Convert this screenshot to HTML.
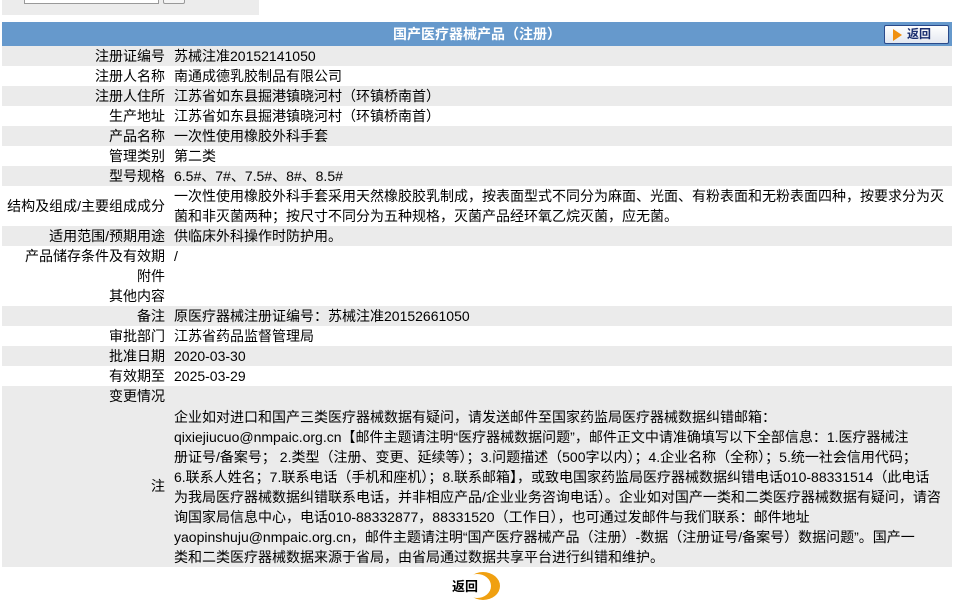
<!DOCTYPE html>
<html><head><meta charset="utf-8"><style>
body{margin:0;width:953px;height:601px;background:#fff;font-family:"Liberation Sans","Noto Sans CJK SC",sans-serif;font-size:14px;color:#000;position:relative;overflow:hidden}
.top{position:absolute;left:2px;top:0;width:257px;height:15px;background:#ececec}
.in{position:absolute;left:22px;top:-2px;width:133px;height:4px;border:1px solid #999;background:#fff}
.bt{position:absolute;left:161px;top:-2px;width:20px;height:4px;border:1px solid #999;border-radius:2px;background:#f4f4f4}
.hd{position:absolute;left:2px;top:22px;width:950px;height:24px;background:#6699cc;color:#fff;font-weight:bold;text-align:center;line-height:24px;font-size:14px}
.rb{position:absolute;right:3px;top:3px;width:63px;height:17px;background:linear-gradient(#fff,#e4e8f0);border:1px solid #2a4a8a;border-radius:2px;color:#1a2e6e;line-height:17px;font-size:12px;text-align:left}
.rb i{display:inline-block;margin:0 5px 0 8px;width:0;height:0;border-left:9px solid #f09010;border-top:6px solid transparent;border-bottom:6px solid transparent;vertical-align:middle}
.r{position:absolute;left:2px;width:950px;height:20px;line-height:20px;overflow:hidden}
.g{background:#ebebeb}
.l{position:absolute;left:0;width:163px;text-align:right;white-space:nowrap}
.v{position:absolute;left:172px;right:0;white-space:nowrap}
.foot{position:absolute;left:452px;top:576px;font-weight:bold;font-size:13px}
.c{position:absolute;left:466px;top:572px;width:34px;height:28px;border-radius:50%;background:#f0a010}
.c2{position:absolute;left:463px;top:574px;width:28px;height:24px;border-radius:50%;background:#fff}
</style></head><body>
<div class="top"><div class="in"></div><div class="bt"></div></div>
<div class="hd">国产医疗器械产品（注册）<div class="rb"><i></i>返回</div></div>
<div class="r g" style="top:46px"><span class="l">注册证编号</span><span class="v">苏械注准20152141050</span></div>
<div class="r" style="top:66px"><span class="l">注册人名称</span><span class="v">南通成德乳胶制品有限公司</span></div>
<div class="r g" style="top:86px"><span class="l">注册人住所</span><span class="v">江苏省如东县掘港镇晓河村（环镇桥南首）</span></div>
<div class="r" style="top:106px"><span class="l">生产地址</span><span class="v">江苏省如东县掘港镇晓河村（环镇桥南首）</span></div>
<div class="r g" style="top:126px"><span class="l">产品名称</span><span class="v">一次性使用橡胶外科手套</span></div>
<div class="r" style="top:146px"><span class="l">管理类别</span><span class="v">第二类</span></div>
<div class="r g" style="top:166px"><span class="l">型号规格</span><span class="v">6.5#、7#、7.5#、8#、8.5#</span></div>
<div class="r" style="top:186px;height:40px"><span class="l" style="top:10px">结构及组成/主要组成成分</span><span class="v">一次性使用橡胶外科手套采用天然橡胶胶乳制成，按表面型式不同分为麻面、光面、有粉表面和无粉表面四种，按要求分为灭<br>菌和非灭菌两种；按尺寸不同分为五种规格，灭菌产品经环氧乙烷灭菌，应无菌。</span></div>
<div class="r g" style="top:226px"><span class="l">适用范围/预期用途</span><span class="v">供临床外科操作时防护用。</span></div>
<div class="r" style="top:246px"><span class="l">产品储存条件及有效期</span><span class="v">/</span></div>
<div class="r" style="top:266px"><span class="l">附件</span></div>
<div class="r" style="top:286px"><span class="l">其他内容</span></div>
<div class="r g" style="top:306px"><span class="l">备注</span><span class="v">原医疗器械注册证编号：苏械注准20152661050</span></div>
<div class="r" style="top:326px"><span class="l">审批部门</span><span class="v">江苏省药品监督管理局</span></div>
<div class="r g" style="top:346px"><span class="l">批准日期</span><span class="v">2020-03-30</span></div>
<div class="r" style="top:366px"><span class="l">有效期至</span><span class="v">2025-03-29</span></div>
<div class="r g" style="top:386px;height:181px"><span class="l">变更情况</span><span class="l" style="top:90px">注</span><span class="v" style="top:21px;line-height:20px">企业如对进口和国产三类医疗器械数据有疑问，请发送邮件至国家药监局医疗器械数据纠错邮箱：<br>qixiejiucuo@nmpaic.org.cn【邮件主题请注明“医疗器械数据问题”，邮件正文中请准确填写以下全部信息：1.医疗器械注<br>册证号/备案号； 2.类型（注册、变更、延续等）；3.问题描述（500字以内）；4.企业名称（全称）；5.统一社会信用代码；<br>6.联系人姓名；7.联系电话（手机和座机）；8.联系邮箱】，或致电国家药监局医疗器械数据纠错电话010-88331514（此电话<br>为我局医疗器械数据纠错联系电话，并非相应产品/企业业务咨询电话）。企业如对国产一类和二类医疗器械数据有疑问，请咨<br>询国家局信息中心，电话010-88332877，88331520（工作日），也可通过发邮件与我们联系：邮件地址<br>yaopinshuju@nmpaic.org.cn，邮件主题请注明“国产医疗器械产品（注册）-数据（注册证号/备案号）数据问题”。国产一<br>类和二类医疗器械数据来源于省局，由省局通过数据共享平台进行纠错和维护。</span></div>
<div class="c"></div><div class="c2"></div>
<div class="foot">返回</div>
</body></html>
